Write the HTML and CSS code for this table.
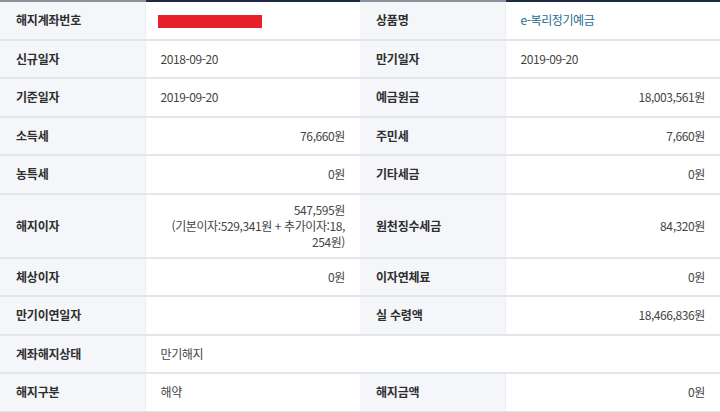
FILE: index.html
```html
<!DOCTYPE html>
<html lang="ko">
<head>
<meta charset="utf-8">
<link rel="stylesheet" href="styles.css">
</head>
<body>
<table class="info">
  <colgroup>
    <col class="c-label"><col class="c-value"><col class="c-label"><col class="c-value2">
  </colgroup>
  <tbody>
    <tr class="first">
      <th>해지계좌번호</th>
      <td><span class="redact"></span></td>
      <th>상품명</th>
      <td><span class="link">e-복리정기예금</span></td>
    </tr>
    <tr>
      <th>신규일자</th><td>2018-09-20</td>
      <th>만기일자</th><td>2019-09-20</td>
    </tr>
    <tr>
      <th>기준일자</th><td>2019-09-20</td>
      <th>예금원금</th><td class="num">18,003,561원</td>
    </tr>
    <tr>
      <th>소득세</th><td class="num">76,660원</td>
      <th>주민세</th><td class="num">7,660원</td>
    </tr>
    <tr>
      <th>농특세</th><td class="num">0원</td>
      <th>기타세금</th><td class="num">0원</td>
    </tr>
    <tr class="tall">
      <th>해지이자</th><td class="num multi">547,595원<br>(기본이자:529,341원 + 추가이자:18,<br>254원)</td>
      <th>원천징수세금</th><td class="num">84,320원</td>
    </tr>
    <tr>
      <th>체상이자</th><td class="num">0원</td>
      <th>이자연체료</th><td class="num">0원</td>
    </tr>
    <tr>
      <th>만기이연일자</th><td></td>
      <th>실 수령액</th><td class="num">18,466,836원</td>
    </tr>
    <tr>
      <th>계좌해지상태</th><td>만기해지</td>
      <td class="blank" colspan="2"></td>
    </tr>
    <tr>
      <th>해지구분</th><td>해약</td>
      <th>해지금액</th><td class="num">0원</td>
    </tr>
  </tbody>
</table>
</body>
</html>
```

FILE: styles.css
```css
html, body {
  margin: 0;
  padding: 0;
  background: #ffffff;
}
body {
  font-family: "Noto Sans CJK KR", "Noto Sans", sans-serif;
  font-size: 12px;
  color: #444;
}
.info {
  width: 720px;
  border-collapse: collapse;
  table-layout: fixed;
}
.c-label { width: 145px; }
.c-value { width: 215px; }
.c-value2 { width: 215px; }
.info th,
.info td {
  height: 36.5px;
  padding: 0 15px;
  border-bottom: 2px solid #e2e5e9;
  vertical-align: middle;
  line-height: 16px;
}
.info th {
  background: #f4f6f9;
  color: #2e2e2e;
  font-weight: 700;
  text-align: left;
  padding-left: 16px;
  letter-spacing: -0.2px;
  border-right: 1px solid #eceef2;
}
.info td {
  text-align: left;
  background: #fff;
  letter-spacing: -0.4px;
}
.info td.num {
  text-align: right;
  padding-right: 15px;
}
.info tr.first th { border-top: 2px solid #8c929c; }
.info tr.first td { border-top: 2px solid #1f2a44; }
.info tr.tall th,
.info tr.tall td { height: 62px; }
.info td.blank { border-bottom: 2px solid #e2e5e9; }
.link { color: #1d6f8e; }
.redact {
  display: inline-block;
  width: 104px;
  height: 13px;
  background: #e8202a;
  vertical-align: middle;
  margin-left: -3px;
}
```
